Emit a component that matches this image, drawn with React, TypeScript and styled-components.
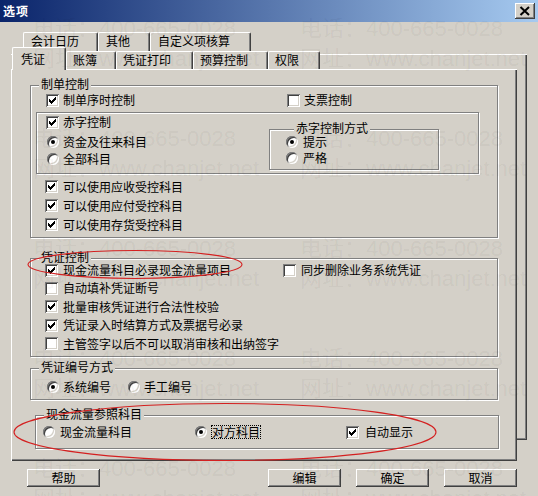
import React from 'react';
import styled, { createGlobalStyle } from 'styled-components';

const GlobalStyle = createGlobalStyle`
  html, body { margin: 0; padding: 0; }
  body {
    background: #d4d0c8;
    font-family: "Noto Sans CJK SC", "Liberation Sans", sans-serif;
    font-size: 12px;
    color: #000;
  }
  *, *::before, *::after { box-sizing: border-box; }
`;

const Window = styled.div`
  position: relative;
  width: 538px;
  height: 496px;
  background: #d4d0c8;
  display: flex;
  flex-direction: column;
  overflow: hidden;
`;

const TitleBar = styled.div`
  flex: none;
  height: 22px;
  display: flex;
  align-items: center;
  justify-content: space-between;
  padding: 0 3px 0 3px;
  background: linear-gradient(to right, #0a246a 0%, #a6caf0 100%);
`;

const Title = styled.span`
  color: #fff;
  font-weight: bold;
  font-size: 12px;
  line-height: 14px;
  letter-spacing: 1px;
`;

const CloseButton = styled.div`
  width: 20px;
  height: 16px;
  background: #d4d0c8;
  box-shadow: inset -1px -1px #404040, inset 1px 1px #fff, inset -2px -2px #808080, inset 2px 2px #d4d0c8;
  display: flex;
  align-items: center;
  justify-content: center;
`;

const Body = styled.div`
  flex: 1;
  display: flex;
  flex-direction: column;
  padding: 10px 0 0 11px;
`;

const TabFrame = styled.div`
  display: grid;
  grid-template-columns: 506px 10px;
  grid-template-rows: 19px 18px 392px;
`;

const BackRow = styled.div`
  grid-column: 1 / 3;
  grid-row: 1;
  display: flex;
  padding-left: 12px;
`;

const BackCard = styled.div`
  grid-column: 1 / 3;
  grid-row: 2 / 4;
  margin: 3px 0 21px 0;
  box-shadow: inset 0 1px #fff, inset -1px -1px #404040, inset -2px -2px #808080;
`;

const FrontRow = styled.div`
  grid-column: 1;
  grid-row: 2;
  display: flex;
  align-items: flex-end;
  padding-left: 1px;
  z-index: 2;
`;

const Tab = styled.div<{ $w: number; $active?: boolean; $back?: boolean }>`
  flex: none;
  width: ${p => p.$w}px;
  height: ${p => (p.$active ? 23 : p.$back ? 19 : 18)}px;
  margin-bottom: ${p => (p.$active ? -1 : 0)}px;
  padding: ${p => (p.$active ? '0 0 0 8px' : p.$back ? '0 0 3px 7px' : '0 0 1px 6px')};
  display: flex;
  align-items: center;
  background: #d4d0c8;
  border-top: 1px solid #fff;
  border-left: 1px solid #fff;
  border-right: 1px solid #404040;
  border-radius: 2px 2px 0 0;
  box-shadow: inset -1px 0 #808080;
  line-height: 14px;
  white-space: nowrap;
  position: relative;
  z-index: ${p => (p.$active ? 1 : 0)};
`;

const Panel = styled.div`
  grid-column: 1;
  grid-row: 3;
  z-index: 1;
  background: #d4d0c8;
  box-shadow: inset 1px 1px #fff, inset -1px -1px #404040, inset -2px -2px #808080;
  display: flex;
  flex-direction: column;
  padding: 16px 19px 0 19px;
`;

const Group = styled.div<{ $mt: number; $pb: number; $inset?: number }>`
  margin: ${p => p.$mt}px ${p => (p.$inset ? -1 : 0)}px 0 ${p => p.$inset ?? 0}px;
  padding-bottom: ${p => p.$pb}px;
  border: 1px solid #808080;
  box-shadow: inset 1px 1px #fff, 1px 1px #fff;
  display: flex;
  flex-direction: column;
`;

const Legend = styled.div`
  align-self: flex-start;
  margin: -9px 0 0 8px;
  padding: 0 2px;
  height: 14px;
  line-height: 14px;
  background: #d4d0c8;
  white-space: nowrap;
`;

const InnerBox = styled.div`
  margin: 3px 0 0 5px;
  width: 443px;
  height: 62px;
  border: 1px solid #808080;
  box-shadow: inset 1px 1px #fff, 1px 1px #fff;
  display: flex;
`;

const InnerLeft = styled.div`
  width: 232px;
  padding-left: 9px;
  display: flex;
  flex-direction: column;
`;

const SubGroup = styled.div`
  margin-top: 16px;
  width: 170px;
  height: 41px;
  padding-left: 16px;
  border: 1px solid #808080;
  box-shadow: inset 1px 1px #fff, 1px 1px #fff;
  display: flex;
  flex-direction: column;
`;

const Line = styled.div<{ $h: number; $mt?: number; $pl?: number }>`
  display: flex;
  align-items: center;
  height: ${p => p.$h}px;
  margin-top: ${p => p.$mt ?? 0}px;
  padding-left: ${p => p.$pl ?? 0}px;
  flex: none;
`;

const Option = styled.div<{ $w?: number }>`
  display: flex;
  align-items: center;
  flex: none;
  width: ${p => (p.$w ? `${p.$w}px` : 'auto')};
  white-space: nowrap;
`;

const CheckBox = styled.span`
  flex: none;
  width: 13px;
  height: 13px;
  background: #fff;
  box-shadow: inset 1px 1px #808080, inset -1px -1px #fff, inset 2px 2px #404040, inset -2px -2px #d4d0c8;
  display: flex;
`;

const Radio = styled.span<{ $on?: boolean }>`
  flex: none;
  width: 12px;
  height: 12px;
  border-radius: 50%;
  background: #fff;
  box-shadow: inset 1px 1px #808080, inset -1px -1px #fff, inset 2px 2px #404040, inset -2px -2px #d4d0c8;
  display: flex;
  align-items: center;
  justify-content: center;
  &::after {
    content: '';
    display: ${p => (p.$on ? 'block' : 'none')};
    width: 4px;
    height: 4px;
    border-radius: 50%;
    background: #000;
  }
`;

const Label = styled.span<{ $gap?: number; $focus?: boolean }>`
  margin-left: ${p => p.$gap ?? 4}px;
  line-height: ${p => (p.$focus ? 12 : 14)}px;
  border: ${p => (p.$focus ? '1px dotted #000' : 'none')};
  padding: ${p => (p.$focus ? '0 0 0 0' : '0')};
`;

const ButtonRow = styled.div`
  width: 506px;
  margin-top: 8px;
  padding-left: 16px;
  display: flex;
  justify-content: space-between;
`;

const ButtonGroup = styled.div`
  display: flex;
  gap: 15px;
`;

const Button = styled.div`
  width: 73px;
  height: 18px;
  display: flex;
  align-items: center;
  justify-content: center;
  line-height: 14px;
  background: #d4d0c8;
  box-shadow: inset -1px -1px #404040, inset 1px 1px #fff, inset -2px -2px #808080, inset 2px 2px #d4d0c8;
`;

const Watermark = styled.div`
  position: absolute;
  inset: 0;
  pointer-events: none;
  display: grid;
  grid-template-columns: 267px 267px;
  grid-auto-rows: 110px;
  padding: 14px 0 0 33px;
  color: rgba(0, 0, 0, 0.055);
  font-family: "Liberation Sans", "Noto Sans CJK SC", sans-serif;
  font-size: 22px;
  line-height: 30px;
  z-index: 5;
`;

const Mark = styled.div`
  white-space: nowrap;
`;

const Annotations = styled.svg`
  position: absolute;
  left: 0;
  top: 0;
  pointer-events: none;
  z-index: 6;
`;

const CheckMark = () => (
  <svg width="13" height="13" viewBox="0 0 13 13" shapeRendering="crispEdges">
    <path
      d="M3 5h1v3H3zM4 6h1v3H4zM5 7h1v3H5zM6 6h1v3H6zM7 5h1v3H7zM8 4h1v3H8zM9 3h1v3H9z"
      fill="#000"
    />
  </svg>
);

const Check = ({ on }: { on?: boolean }) => <CheckBox>{on ? <CheckMark /> : null}</CheckBox>;

export default function App() {
  const marks = Array.from({ length: 10 });
  return (
    <>
      <GlobalStyle />
      <Window>
        <TitleBar>
          <Title>选项</Title>
          <CloseButton>
            <svg width="12" height="10" viewBox="0 0 12 10">
              <path d="M1.5 1 L10 9 M10 1 L1.5 9" stroke="#000" strokeWidth="2" />
            </svg>
          </CloseButton>
        </TitleBar>
        <Body>
          <TabFrame>
            <BackRow>
              <Tab $back $w={75}>会计日历</Tab>
              <Tab $back $w={52}>其他</Tab>
              <Tab $back $w={101}>自定义项核算</Tab>
            </BackRow>
            <BackCard />
            <FrontRow>
              <Tab $active $w={54}>凭证</Tab>
              <Tab $w={50}>账簿</Tab>
              <Tab $w={77}>凭证打印</Tab>
              <Tab $w={75}>预算控制</Tab>
              <Tab $w={52}>权限</Tab>
            </FrontRow>
            <Panel>
              <Group $mt={0} $pb={3}>
                <Legend>制单控制</Legend>
                <Line $h={18} $pl={15}>
                  <Option $w={241}>
                    <Check on />
                    <Label>制单序时控制</Label>
                  </Option>
                  <Option>
                    <Check />
                    <Label>支票控制</Label>
                  </Option>
                </Line>
                <InnerBox>
                  <InnerLeft>
                    <Line $h={16} $mt={1}>
                      <Check on />
                      <Label>赤字控制</Label>
                    </Line>
                    <Line $h={17} $mt={3} $pl={1}>
                      <Radio $on />
                      <Label>资金及往来科目</Label>
                    </Line>
                    <Line $h={17} $pl={1}>
                      <Radio />
                      <Label>全部科目</Label>
                    </Line>
                  </InnerLeft>
                  <SubGroup>
                    <Legend>赤字控制方式</Legend>
                    <Line $h={16} $mt={-1}>
                      <Radio $on />
                      <Label $gap={5}>提示</Label>
                    </Line>
                    <Line $h={16}>
                      <Radio />
                      <Label $gap={5}>严格</Label>
                    </Line>
                  </SubGroup>
                </InnerBox>
                <Line $h={19} $mt={3} $pl={14}>
                  <Check on />
                  <Label $gap={5}>可以使用应收受控科目</Label>
                </Line>
                <Line $h={19} $pl={14}>
                  <Check on />
                  <Label $gap={5}>可以使用应付受控科目</Label>
                </Line>
                <Line $h={19} $pl={14}>
                  <Check on />
                  <Label $gap={5}>可以使用存货受控科目</Label>
                </Line>
              </Group>

              <Group $mt={20} $pb={3}>
                <Legend>凭证控制</Legend>
                <Line $h={18} $mt={-3} $pl={14}>
                  <Option $w={238}>
                    <Check on />
                    <Label $gap={5}>现金流量科目必录现金流量项目</Label>
                  </Option>
                  <Option>
                    <Check />
                    <Label $gap={5}>同步删除业务系统凭证</Label>
                  </Option>
                </Line>
                <Line $h={18} $pl={14}>
                  <Check />
                  <Label $gap={5}>自动填补凭证断号</Label>
                </Line>
                <Line $h={19} $pl={14}>
                  <Check on />
                  <Label $gap={5}>批量审核凭证进行合法性校验</Label>
                </Line>
                <Line $h={18} $pl={14}>
                  <Check on />
                  <Label $gap={5}>凭证录入时结算方式及票据号必录</Label>
                </Line>
                <Line $h={19} $pl={14}>
                  <Check />
                  <Label $gap={5}>主管签字以后不可以取消审核和出纳签字</Label>
                </Line>
              </Group>

              <Group $mt={11} $pb={3}>
                <Legend>凭证编号方式</Legend>
                <Line $h={18} $mt={4} $pl={16}>
                  <Option $w={81}>
                    <Radio $on />
                    <Label>系统编号</Label>
                  </Option>
                  <Option>
                    <Radio />
                    <Label>手工编号</Label>
                  </Option>
                </Line>
              </Group>

              <Group $mt={15} $pb={7} $inset={5}>
                <Legend>现金流量参照科目</Legend>
                <Line $h={18} $mt={2} $pl={7}>
                  <Option $w={152}>
                    <Radio />
                    <Label $gap={5}>现金流量科目</Label>
                  </Option>
                  <Option $w={151}>
                    <Radio $on />
                    <Label $gap={4} $focus>
                      对方科目
                    </Label>
                  </Option>
                  <Option>
                    <Check on />
                    <Label $gap={6}>自动显示</Label>
                  </Option>
                </Line>
              </Group>
            </Panel>
          </TabFrame>
          <ButtonRow>
            <Button>帮助</Button>
            <ButtonGroup>
              <Button>编辑</Button>
              <Button>确定</Button>
              <Button>取消</Button>
            </ButtonGroup>
          </ButtonRow>
        </Body>
        <Watermark>
          {marks.map((_, i) => (
            <Mark key={i}>
              电话：400-665-0028
              <br />
              网址：www.chanjet.net
            </Mark>
          ))}
        </Watermark>
        <Annotations width="538" height="496" viewBox="0 0 538 496">
          <ellipse cx="135" cy="264.5" rx="107" ry="14" fill="none" stroke="#d42020" strokeWidth="1.1" />
          <ellipse cx="225" cy="432" rx="211" ry="28.5" fill="none" stroke="#d42020" strokeWidth="1.1" />
        </Annotations>
      </Window>
    </>
  );
}
